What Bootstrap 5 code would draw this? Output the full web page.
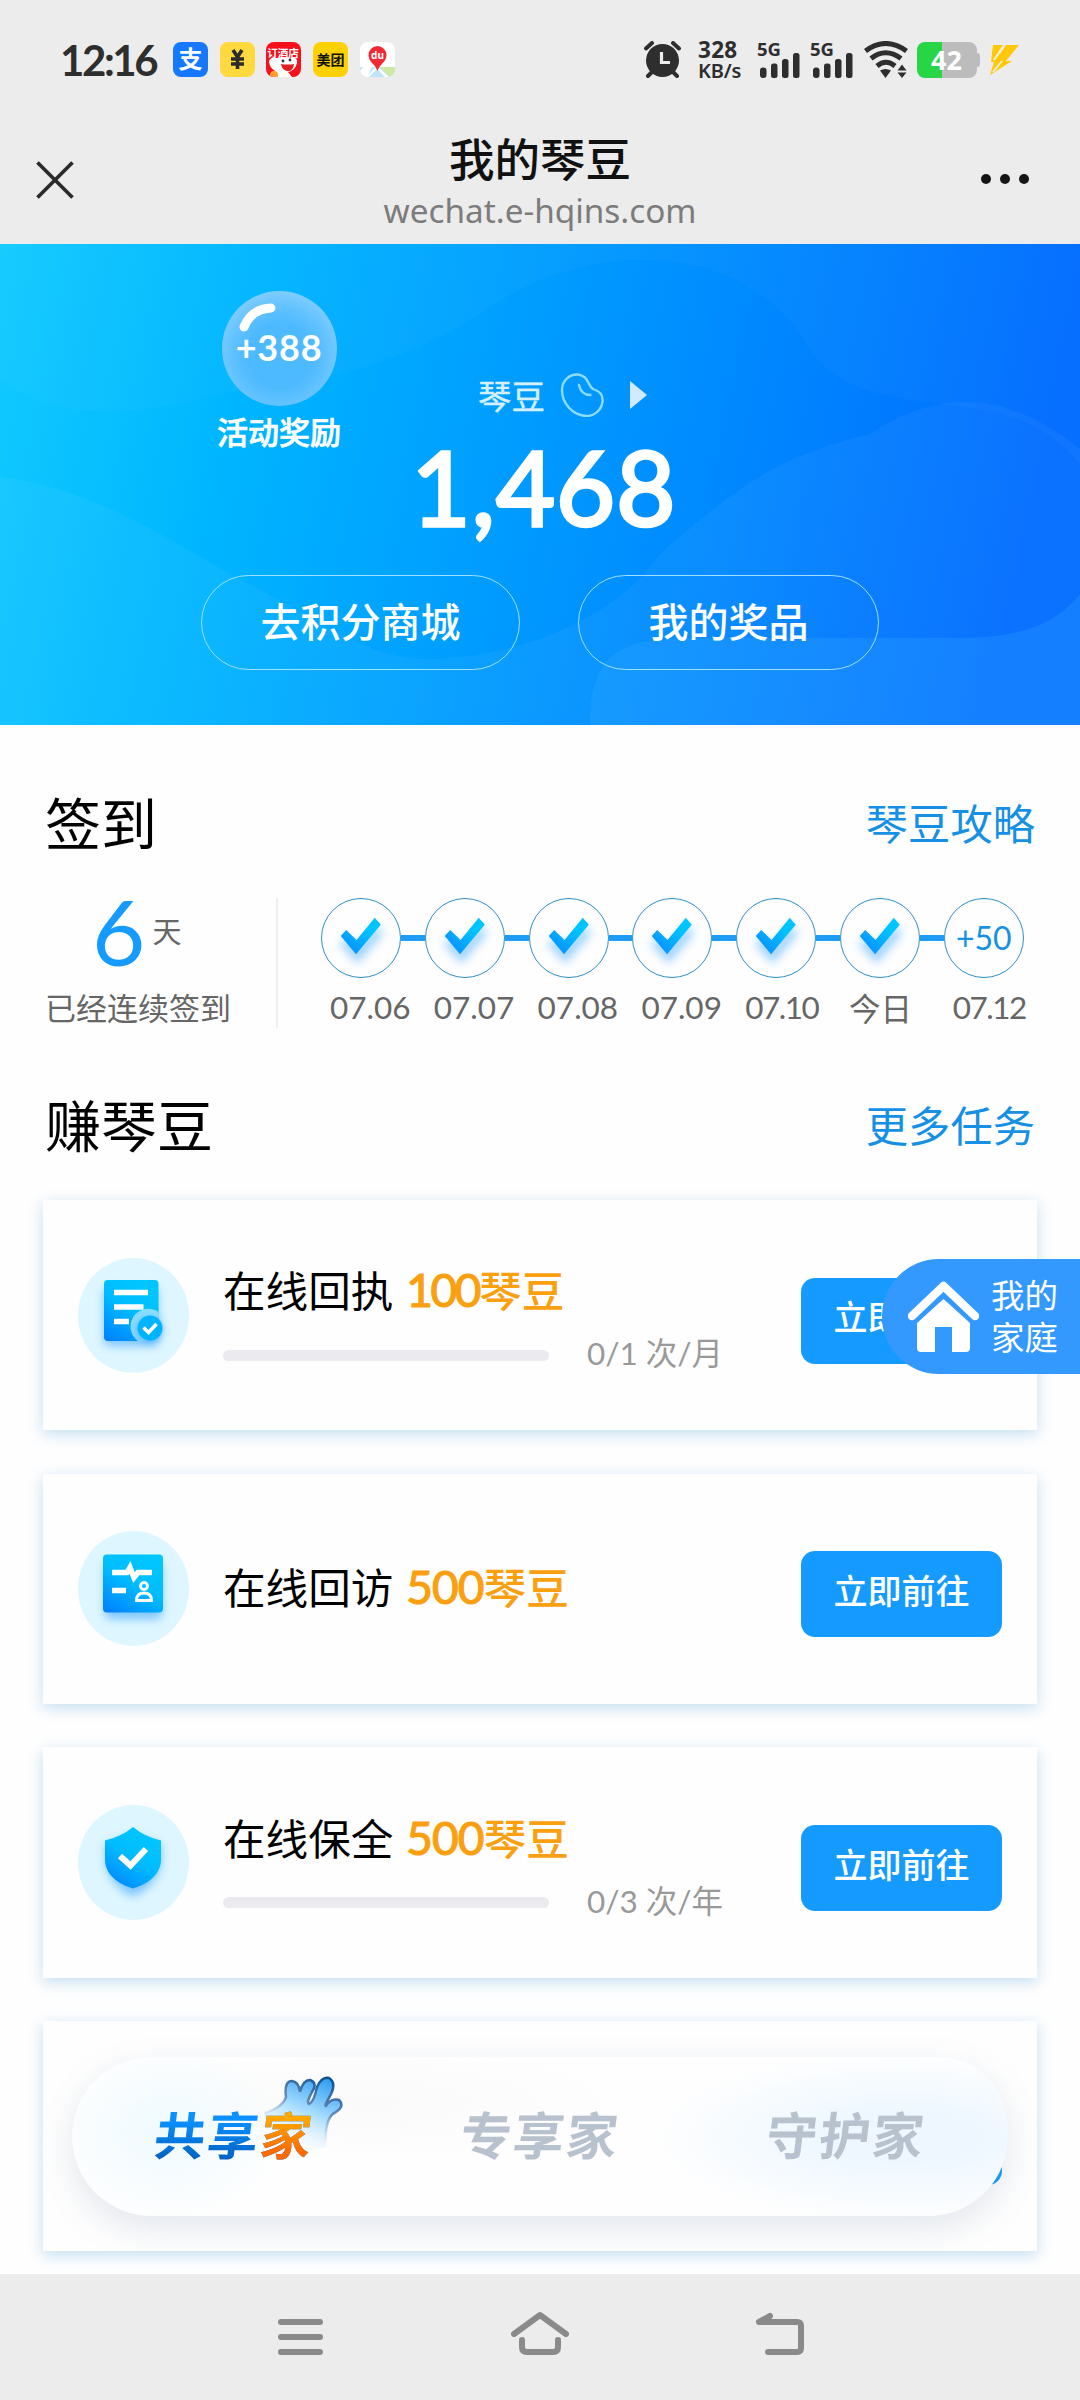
<!DOCTYPE html>
<html lang="zh-CN">
<head>
<meta charset="utf-8">
<meta name="viewport" content="width=device-width, initial-scale=1">
<title>我的琴豆</title>
<link href="https://cdn.jsdelivr.net/npm/bootstrap@5.3.0/dist/css/bootstrap.min.css" rel="stylesheet">
<style>
  body { width: 1080px; height: 2400px; overflow: hidden; background: #fefefe; color: #000;
         font-family: Lato, "Noto Sans CJK SC", sans-serif; line-height: 1; }
  svg { display: block; flex: none; }
  .cjk { font-family: "Noto Sans CJK SC", sans-serif; }
  .top-area { height: 244px; background: #ececec; color: #2e2e2e; }
  .status-row { height: 119px; padding: 0 60px 0 60px; }
  .clock { font-size: 42px; font-weight: 700; width: 113px; letter-spacing: -2.4px; }
  .app-tile { width: 35px; height: 35px; border-radius: 8px; margin-right: 11.7px; overflow: hidden; }
  .net-speed { font-family: "Noto Sans", sans-serif; font-weight: 700; width: 59px; }
  .title-row { height: 125px; }
  .page-name { font-size: 45.5px; font-weight: 500; color: #111; line-height: 60px; padding-top: 8px; }
  .page-url { font-family: "Noto Sans", sans-serif; font-size: 33.3px; color: #7c7c7c; line-height: 42px; padding-top: 2px; }

  .hero { height: 481px; background: linear-gradient(102deg, #12caff 0%, #00b6ff 22%, #0097ff 52%, #006cff 92%); color: #fff; }
  .hero-bg { top: 0; left: 0; }
  .bubble-box { left: 209px; top: 47px; width: 140px; }
  .bubble { width: 115px; height: 115px; background: radial-gradient(circle at 50% 56%, #4dbaff 38%, #62c2ff 56%, #a8dbff 100%); font-size: 36px; font-weight: 700; letter-spacing: .8px; }
  .bubble span { margin-top: -3px; }
  .bubble-name { font-size: 31px; font-weight: 500; line-height: 44px; margin-top: 3px; -webkit-text-stroke: .7px #fff; }
  .bean-row { margin-top: 126px; height: 50px; padding-left: 45px; font-size: 33.5px; color: #d4f0ff; -webkit-text-stroke: .4px #d4f0ff; }
  .total { font-size: 102px; font-weight: 400; -webkit-text-stroke: 3.4px #fff; line-height: 110px; letter-spacing: 1px; padding-left: 8px; margin-top: 12px; }
  .hero-btn { height: 95px; border: 1.5px solid #9fe0ff; border-radius: 48px; color: #fff; font-size: 40px; font-weight: 500; padding: 0 0 6px; }

  .section-head { padding: 0 45px 6px; height: 84px; }
  .section-name { font-size: 56px; }
  .section-link { font-size: 42.3px; color: #1590e4; text-decoration: none; position: relative; padding-top: 3px; }
  .sign-row { height: 130px; padding-left: 45px; }
  .sign-count { width: 233px; border-right: 2px solid #f0f0f0; color: #666; }
  .big-day { font-size: 92px; color: #159bff; line-height: 66px; }
  .sign-text { font-size: 31px; line-height: 40px; white-space: nowrap; }
  .day-col { width: 103.8px; }
  .day-dot { width: 80px; height: 80px; border: 1.5px solid #2f8fc9; border-radius: 50%; flex: none; color: #1590e4; font-size: 32px; }
  .day-line { height: 6px; flex: 1; background: #1f9cf8; }
  .day-name { font-size: 31.5px; color: #666; line-height: 40px; margin: 9px 0 0 9px; white-space: nowrap; }
  .day-name.tight { letter-spacing: -1.5px; }

  .task-list { padding: 0 43px; gap: 43.3px; }
  .task { height: 230.4px; background: #fefefe; box-shadow: 0 4px 14px rgba(60,150,215,.3); padding: 0 35px; }
  .task-icon { width: 111px; height: 115px; border-radius: 50%; background: #def6ff; }
  .task-body { width: 500px; margin-left: 34px; }
  .task-name { font-size: 42.6px; line-height: 60px; height: 60px; white-space: nowrap; margin-top: -2px; }
  .task-name b { color: #faa010; font-weight: 500; }
  .task-name i { font-style: normal; font-weight: 400; font-size: 46px; line-height: 1; letter-spacing: -.9px; -webkit-text-stroke: 1.2px #faa010; margin-left: 2px; }
  .task-name i.narrow { letter-spacing: -2.4px; }
  .prog-row { margin-top: 14px; margin-bottom: -8px; }
  .prog { width: 326px; height: 11px; border-radius: 6px; background: #ebebef; }
  .prog-text { font-size: 31.5px; line-height: 44px; color: #999; margin-top: -4px; }
  .go-btn { width: 201px; height: 86px; border-radius: 14px; background: #159bff; color: #fff; border: 0; font-size: 34px; font-weight: 500; padding: 0 0 10px; margin-top: 11px; }
  .float-home { top: 1259px; right: 0; width: 198px; height: 115px; border-radius: 57px 0 0 57px; background: #3399ff; color: #fff; font-size: 33.5px; line-height: 42px; padding-left: 26px; }

  .pill { width: 936px; height: 159px; border-radius: 80px 70px 80px 80px;
          background: radial-gradient(ellipse 120px 90px at 95px 75px, #effaff, rgba(239,250,255,0)), radial-gradient(ellipse 250px 85px at 830px 80px, #eef7ff 30%, rgba(240,248,255,0)), radial-gradient(ellipse 260px 60px at 300px 45px, #fafafa, rgba(250,250,250,0)), #fefefe;
          box-shadow: 0 12px 34px rgba(90,110,150,.17); left: 29px; top: 36px; padding-bottom: 7px; }
  .pill-clip { top: 2021px; left: 43px; width: 994px; height: 230px; overflow: hidden; }
  .tab-name { font-size: 51px; font-weight: 700; letter-spacing: 2px; color: #b8c1ce; transform: skewX(-7deg); white-space: nowrap; line-height: 60px; }
  .tab-name.on { background: linear-gradient(#0a90ff 30%, #0061c0 95%); -webkit-background-clip: text; color: transparent; }
  .tab-name .home-word { background: linear-gradient(#ffa800 30%, #ff6a00 75%); -webkit-background-clip: text; color: transparent; }
  .hand { left: 192px; top: 17px; }
  .system-bar { height: 126px; bottom: 0; background: #ececec; z-index: 3; }
</style>
<script src="https://cdn.jsdelivr.net/npm/bootstrap@5.3.0/dist/js/bootstrap.bundle.min.js"></script>
</head>
<body class="position-relative">

<svg width="0" height="0" class="position-absolute">
  <defs>
    <linearGradient id="tick" x1="0" y1="1" x2="1" y2="0"><stop offset=".15" stop-color="#0a92ff"/><stop offset=".7" stop-color="#00c4ff"/></linearGradient>
    <linearGradient id="ico" x1="0" y1="1" x2=".6" y2="0"><stop offset="0" stop-color="#007dff"/><stop offset=".6" stop-color="#00bcff"/><stop offset="1" stop-color="#00c6ff"/></linearGradient>
    <filter id="soft" x="-50%" y="-50%" width="200%" height="200%"><feGaussianBlur stdDeviation="5"/></filter>
    <symbol id="check" viewBox="0 0 78 78">
      <path d="M22 42l14 15 22-26" fill="none" stroke="#5cb5ff" stroke-width="11" opacity=".6" filter="url(#soft)"/>
      <path d="M19 37.500l5.500-6 10.500 10L53.500 19l6 7-25 30z" fill="url(#tick)"/>
    </symbol>
    <symbol id="bars" viewBox="0 0 42 36">
      <g fill="#2e2e2e"><rect x="1" y="25.500" width="6.500" height="10.500" rx="3"/><rect x="12" y="21.500" width="6.500" height="14.500" rx="2.500"/><rect x="23" y="17" width="6.500" height="19" rx="2.500"/><rect x="34" y="11" width="6.500" height="25" rx="2.500"/></g>
    </symbol>
  </defs>
</svg>

<header class="top-area">
  <div class="status-row d-flex align-items-center">
    <div class="clock">12:16</div>
    <svg class="app-tile" viewBox="0 0 35 35"><rect width="35" height="35" fill="#1677ff"/><text x="17.500" y="26" font-size="24" font-weight="700" fill="#fff" text-anchor="middle" font-family="Noto Sans CJK SC">支</text></svg>
    <svg class="app-tile" viewBox="0 0 35 35"><rect width="35" height="35" fill="#ffd93d"/><path d="M13 8l4.500 7L22 8M17.500 14v13M11 17h13M11 22h13" fill="none" stroke="#2b2b2b" stroke-width="3.600"/></svg>
    <svg class="app-tile" viewBox="0 0 35 35"><rect width="35" height="35" fill="#f5101c"/><text x="17" y="15" font-size="10.500" font-weight="700" fill="#fff" text-anchor="middle" font-family="Noto Sans CJK SC">订酒店</text><path d="M3 19q2-5 8-3 8-2 14 0 7-1 6 5-2 8-9 9l4 5H7l2-6Q3 25 3 19z" fill="#fff"/><path d="M15 22q7 1 13 0-1 8-7 7-5-1-6-7z" fill="#e02020"/><circle cx="17" cy="19" r="1.400" fill="#333"/><circle cx="24" cy="18" r="1.400" fill="#333"/><circle cx="8" cy="33" r="4" fill="#ff9d2e"/></svg>
    <svg class="app-tile" viewBox="0 0 35 35"><rect width="35" height="35" fill="#ffd100"/><text x="17.500" y="22.800" font-size="14" font-weight="700" fill="#111" text-anchor="middle" font-family="Noto Sans CJK SC">美团</text></svg>
    <svg class="app-tile" viewBox="0 0 35 35"><rect width="35" height="35" fill="#fff"/><path d="M0 25h35v10H0z" fill="#bfe6f8"/><path d="M20 25h15v10h-5z" fill="#cdeaa5"/><path d="M3 25h9l-5 10H0v-6zM17 24l12 11h-4l-8-8-8 8H6z" fill="#fff"/><path d="M17.500 4a9 9 0 0 1 9 9c0 7-6 8-9 16-3-8-9-9-9-16a9 9 0 0 1 9-9z" fill="#ee2a35"/><text x="17.500" y="16.500" font-size="10" font-weight="700" fill="#fff" text-anchor="middle" font-family="Noto Sans">du</text></svg>

    <svg width="37" height="37" viewBox="0 0 37 37" style="margin-left:auto"><circle cx="18.500" cy="19.500" r="16.500" fill="#2e2e2e"/><path d="M2 7.500l6-5.500M35 7.500l-6-5.500M4 35l4-4M33 35l-4-4" stroke="#2e2e2e" stroke-width="4" stroke-linecap="round"/><path d="M17.500 11v10.500H26" fill="none" stroke="#ececec" stroke-width="3.200"/></svg>
    <div class="net-speed" style="margin-left:17px"><div style="font-size:22.500px;line-height:22px;letter-spacing:.3px">328</div><div style="font-size:20px;line-height:19px;font-weight:600;letter-spacing:-.2px">KB/s</div></div>
    <div class="position-relative" style="margin-left:2px"><svg width="42" height="36"><use href="#bars"/></svg><span class="position-absolute fw-bold" style="left:-2px;top:-3px;font:700 18.500px/20px 'Noto Sans'">5G</span></div>
    <div class="position-relative" style="margin-left:11px"><svg width="42" height="36"><use href="#bars"/></svg><span class="position-absolute fw-bold" style="left:-2px;top:-3px;font:700 18.500px/20px 'Noto Sans'">5G</span></div>
    <svg width="44" height="37" viewBox="0 0 44 37" style="margin-left:10px"><g fill="none" stroke="#2e2e2e" stroke-width="5"><path d="M1.500 10q20-15 41 0M7 17.500q14.500-11.500 30 0M13 25q9-7.500 18 0"/></g><path d="M16 29.500q5.500-3 11 0L21.500 37zM33.500 29.500l4.500-6 4.500 6zM33.500 31.500h9l-4.500 5.500z" fill="#2e2e2e"/></svg>
    <svg width="63" height="36" viewBox="0 0 63 36" style="margin-left:9px"><path d="M8 0h17v36H8a8 8 0 0 1-8-8V8a8 8 0 0 1 8-8z" fill="#27d545"/><path d="M25 0h27a8 8 0 0 1 8 8v3q3 0 3 3v8q0 3-3 3v3a8 8 0 0 1-8 8H25z" fill="#bcbcbc"/><text x="29.500" y="28" font-size="27" font-weight="700" fill="#fff" text-anchor="middle" font-family="Noto Sans">42</text></svg>
    <svg width="31" height="31" viewBox="0 0 31 31" style="margin-left:9px"><path d="M4 1h11L9 13 17 1h13L17 17h6L1 31l4-13H2z" fill="#ffc90a"/><path d="M15 1L5 16M13 17L4 28" stroke="#f4f0dc" stroke-width="1.800"/></svg>
  </div>
  <div class="title-row position-relative text-center">
    <svg class="position-absolute" style="left:36px;top:42px" width="38" height="38" viewBox="0 0 38 38"><path d="M1.500 1.500l35 35M36.500 1.500l-35 35" stroke="#2a2a2a" stroke-width="3.700"/></svg>
    <div class="page-name cjk">我的琴豆</div>
    <div class="page-url">wechat.e-hqins.com</div>
    <svg class="position-absolute" style="right:50px;top:54px" width="50" height="12" viewBox="0 0 50 12"><g fill="#151515"><circle cx="6" cy="6" r="5"/><circle cx="25" cy="6" r="5"/><circle cx="44" cy="6" r="5"/></g></svg>
  </div>
</header>

<section class="hero position-relative overflow-hidden">
  <svg class="hero-bg position-absolute" width="1080" height="481" viewBox="0 0 1080 481">
    <path d="M0 0H1080V220C1000 120 860 200 800 90 740 0 590-10 480 70 350 150 280 130 210 154 130 170 60 180 0 135z" fill="#fff" opacity=".022"/>
    <path d="M0 233C90 244 160 290 230 330 320 375 370 420 440 415 530 410 620 370 660 310 750 230 790 210 870 190 930 150 1000 140 1080 205V481H0z" fill="#fff" opacity=".045"/>
    <path d="M590 481C590 400 630 395 700 394H960C1030 394 1060 375 1080 350V481z" fill="#3ab0ff" opacity=".22"/>
  </svg>
  <div class="bubble-box position-absolute d-flex flex-column align-items-center">
    <div class="bubble rounded-circle position-relative d-flex align-items-center justify-content-center">
      <svg class="position-absolute top-0 start-0" width="115" height="115" viewBox="0 0 115 115"><path d="M22 36Q29 18 49 17" fill="none" stroke="#fff" stroke-width="9" stroke-linecap="round"/></svg>
      <span>+388</span>
    </div>
    <div class="bubble-name cjk">活动奖励</div>
  </div>
  <div class="d-flex flex-column align-items-center position-relative">
    <div class="bean-row d-flex align-items-center"><span class="cjk">琴豆</span>
      <svg width="44" height="44" viewBox="0 0 44 44" style="margin-left:15px"><path d="M2 17C2 7 10 1 18 1.500 29 3 27 12 33 16 41 19 43 22 42.500 29 41 38 34 43 26 43 12 42 2 30 2 17zM19 12q2 10 11.500 10" fill="none" stroke="#8bdcff" stroke-width="2.400" stroke-linecap="round"/></svg>
      <svg width="17" height="28" viewBox="0 0 17 28" style="margin-left:26px"><path d="M0 0l17 14L0 28z" fill="#d2eaff"/></svg>
    </div>
    <div class="total">1,468</div>
    <div class="d-flex" style="gap:58px;margin-top:33px">
      <button class="btn hero-btn cjk" style="width:319px">去积分商城</button>
      <button class="btn hero-btn cjk" style="width:301px">我的奖品</button>
    </div>
  </div>
</section>

<div class="section-head cjk d-flex align-items-center justify-content-between" style="margin-top:57px"><span class="section-name">签到</span><a class="section-link">琴豆攻略</a></div>
<section class="sign-row d-flex" style="margin-top:32px">
  <div class="sign-count">
    <div class="d-flex" style="padding-left:47px;height:74px"><span class="big-day">6</span><span class="cjk" style="font-size:29px;margin:18px 0 0 7px">天</span></div>
    <div class="sign-text cjk" style="margin-top:15px">已经连续签到</div>
  </div>
  <div class="d-flex" style="margin-left:43px">
    <div class="day-col"><div class="d-flex align-items-center"><div class="day-dot"><svg width="77" height="77"><use href="#check"/></svg></div><div class="day-line"></div></div><div class="day-name">07.06</div></div>
    <div class="day-col"><div class="d-flex align-items-center"><div class="day-dot"><svg width="77" height="77"><use href="#check"/></svg></div><div class="day-line"></div></div><div class="day-name">07.07</div></div>
    <div class="day-col"><div class="d-flex align-items-center"><div class="day-dot"><svg width="77" height="77"><use href="#check"/></svg></div><div class="day-line"></div></div><div class="day-name">07.08</div></div>
    <div class="day-col"><div class="d-flex align-items-center"><div class="day-dot"><svg width="77" height="77"><use href="#check"/></svg></div><div class="day-line"></div></div><div class="day-name">07.09</div></div>
    <div class="day-col"><div class="d-flex align-items-center"><div class="day-dot"><svg width="77" height="77"><use href="#check"/></svg></div><div class="day-line"></div></div><div class="day-name tight">07.10</div></div>
    <div class="day-col"><div class="d-flex align-items-center"><div class="day-dot"><svg width="77" height="77"><use href="#check"/></svg></div><div class="day-line"></div></div><div class="day-name cjk">今日</div></div>
    <div class="day-col"><div class="d-flex"><div class="day-dot d-flex align-items-center justify-content-center">+50</div></div><div class="day-name tight">07.12</div></div>
  </div>
</section>
<div class="section-head cjk d-flex align-items-center justify-content-between" style="margin-top:56px"><span class="section-name">赚琴豆</span><a class="section-link">更多任务</a></div>

<main class="task-list d-flex flex-column" style="margin-top:32px">
  <div class="task d-flex align-items-center">
    <div class="task-icon"><svg width="111" height="115" viewBox="0 0 111 115"><rect x="26" y="30" width="54" height="58" rx="5" fill="#3aa5ff" opacity=".6" filter="url(#soft)"/><rect x="26" y="22" width="54.500" height="61" rx="4" fill="url(#ico)"/><path d="M36 34.500h34M36 49h29.500M36 63.500h15" stroke="#fff" stroke-width="5.500"/><path d="M80.500 54A17 17 0 0 0 60 83h20.500z" fill="#b8eaff" opacity=".75"/><circle cx="72" cy="72" r="11" fill="#37a5ff" filter="url(#soft)"/><circle cx="72" cy="70" r="12.500" fill="#00b3ff"/><path d="M65.500 69.500l5 5 8-8.500" fill="none" stroke="#fff" stroke-width="3.600"/></svg></div>
    <div class="task-body"><div class="task-name">在线回执 <b><i class="narrow">100</i>琴豆</b></div><div class="prog-row d-flex align-items-center justify-content-between"><div class="prog"></div><div class="prog-text">0/1 次/月</div></div></div>
    <button class="btn go-btn cjk ms-auto">立即前往</button>
  </div>
  <div class="task d-flex align-items-center">
    <div class="task-icon"><svg width="111" height="115" viewBox="0 0 111 115"><rect x="27" y="32" width="57" height="56" rx="5" fill="#3aa5ff" opacity=".6" filter="url(#soft)"/><rect x="25" y="23.500" width="60" height="58" rx="4" fill="url(#ico)"/><path d="M34 41.500h15l3-5 4 10 4-5h14M34 59.500h14" stroke="#fff" stroke-width="5.500" fill="none"/><circle cx="66" cy="55" r="3.500" fill="none" stroke="#fff" stroke-width="2.800"/><path d="M58.500 69.500q0-7.500 7.500-7.500t7.500 7.500z" fill="none" stroke="#fff" stroke-width="2.800"/></svg></div>
    <div class="task-body"><div class="task-name">在线回访 <b><i>500</i>琴豆</b></div></div>
    <button class="btn go-btn cjk ms-auto">立即前往</button>
  </div>
  <div class="task d-flex align-items-center">
    <div class="task-icon"><svg width="111" height="115" viewBox="0 0 111 115"><path d="M55 30L83 40V56Q82 78 55 92 29 78 28 56V40z" fill="#3aa5ff" opacity=".6" filter="url(#soft)"/><path d="M55 22Q67 32 83 35.500V56C82 70 70 79 55 83.500 40 79 28 70 27 56V35.500Q43 32 55 22z" fill="url(#ico)"/><path d="M42 51l10.500 9.500L68 44" fill="none" stroke="#fff" stroke-width="6"/></svg></div>
    <div class="task-body"><div class="task-name">在线保全 <b><i>500</i>琴豆</b></div><div class="prog-row d-flex align-items-center justify-content-between"><div class="prog"></div><div class="prog-text">0/3 次/年</div></div></div>
    <button class="btn go-btn cjk ms-auto">立即前往</button>
  </div>
  <div class="task d-flex align-items-center">
    <button class="btn go-btn cjk ms-auto" aria-label="立即前往"></button>
  </div>
</main>

<a class="float-home position-absolute d-flex align-items-center text-decoration-none cjk">
  <svg width="71" height="72" viewBox="0 0 71 72"><path d="M4 35L35.500 5 67 35" fill="none" stroke="#fff" stroke-width="8.500" stroke-linecap="round" stroke-linejoin="round"/><path d="M9 42L35.500 18 62 42V67q0 4-4 4H44V46H27V71H13q-4 0-4-4z" fill="#fff"/></svg>
  <span style="margin:0 0 4px 12px">我的<br>家庭</span>
</a>

<div class="pill-clip position-absolute">
  <nav class="pill position-absolute cjk d-flex align-items-center">
    <svg class="hand position-absolute" width="84" height="84" viewBox="0 0 84 84">
      <defs><linearGradient id="hf" x1=".8" y1="0" x2=".4" y2="1"><stop offset="0" stop-color="#2f9df0"/><stop offset=".45" stop-color="#a5dcff"/><stop offset="1" stop-color="#fff" stop-opacity="0"/></linearGradient>
      <linearGradient id="hs" x1=".8" y1="0" x2=".4" y2="1"><stop offset="0" stop-color="#0b4f92"/><stop offset=".4" stop-color="#6a8fba"/><stop offset=".75" stop-color="#b5d3ea" stop-opacity="0"/></linearGradient></defs>
      <path d="M2 38Q20 32 23 22 21 6 29 6 36 7 37 17 40 5 47 5 55 8 49 17 43 28 46 29 51 27 54 12 59 1 66 3 74 8 67 21 61 31 63 31 68 23 76 25 82 31 73 37 61 42 63 72L30 80 4 60z" transform="translate(-1 1)" fill="url(#hf)" stroke="url(#hs)" stroke-width="2.500"/>
    </svg>
    <span class="tab-name on position-relative" style="margin-left:83px">共享<span class="home-word">家</span></span>
    <span class="tab-name" style="margin-left:147px">专享家</span>
    <span class="tab-name" style="margin-left:147px">守护家</span>
  </nav>
</div>

<footer class="system-bar position-absolute w-100 d-flex justify-content-center">
  <svg width="1080" height="126" viewBox="0 0 1080 126"><g fill="none" stroke="#8a8a8a" stroke-width="6" stroke-linecap="round" stroke-linejoin="round"><path d="M281 48h39M281 63h39M281 78h39"/><path d="M514 60l26-19 26 19M522 66v7q0 5 5 5h26q5 0 5-5v-7"/><path d="M770 42l-11 6h38q4 0 4 4v22q0 4-4 4h-29"/></g></svg>
</footer>
</body>
</html>
